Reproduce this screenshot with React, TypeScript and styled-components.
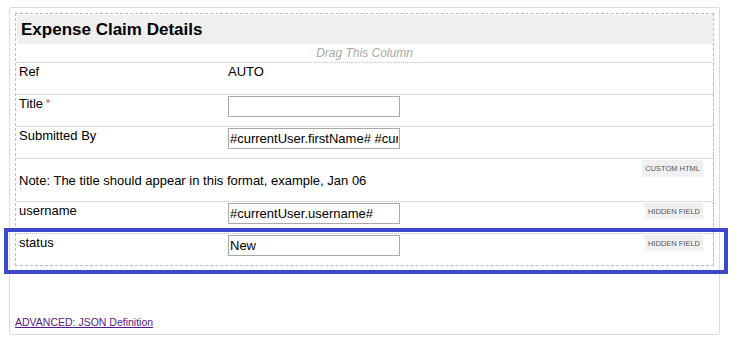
import React from "react";
import styled, { createGlobalStyle } from "styled-components";

const GlobalStyle = createGlobalStyle`
  body {
    margin: 0;
    background: #ffffff;
    font-family: "Liberation Sans", Arial, sans-serif;
    font-size: 13px;
    color: #000;
  }
`;

const Panel = styled.div`
  margin: 7px 0 0 9px;
  width: 711px;
  box-sizing: border-box;
  border: 1px solid #dcdcdc;
  border-radius: 2px;
  padding: 5px 5px 5px 5px;
`;

const Section = styled.div`
  border: 1px dashed #bdbdbd;
`;

const Header = styled.div`
  margin: 1px 0 0 1px;
  height: 29px;
  background: #efefef;
  display: flex;
  align-items: center;
  padding-left: 4px;
  font-size: 17px;
  font-weight: bold;
`;

const DragHint = styled.div`
  height: 18px;
  line-height: 19px;
  text-align: center;
  font-size: 12px;
  font-style: italic;
  color: #a8a8a8;
`;

const Rows = styled.div`
  border-top: 1px dotted #c4c4c4;
  border-right: 1px dotted #c4c4c4;
  margin-right: -1px;
`;

const Row = styled.div<{ $tall?: boolean }>`
  position: relative;
  display: grid;
  grid-template-columns: 209px 1fr auto;
  align-items: start;
  box-sizing: border-box;
  height: ${(p) => (p.$tall ? "43px" : "32px")};
  padding: 1px 10px 0 3px;
  border-bottom: 1px dotted #c4c4c4;
  &:last-child {
    border-bottom: none;
    height: 31px;
  }
`;

const Label = styled.div`
  line-height: 15px;
`;

const Required = styled.span`
  color: #e03a3a;
  font-size: 10px;
  margin-left: 3px;
  vertical-align: top;
`;

const Value = styled.div`
  line-height: 15px;
`;

const NoteText = styled.div`
  grid-column: 1 / 3;
  grid-row: 1;
  margin-top: 13px;
  line-height: 15px;
`;

const Field = styled.input`
  box-sizing: border-box;
  width: 172px;
  height: 21px;
  border: 1px solid #a9a9a9;
  padding: 0 1px;
  font-family: "Liberation Sans", Arial, sans-serif;
  font-size: 13px;
  color: #000;
  background: #fff;
  outline: none;
`;

const Badge = styled.span<{ $tall?: boolean }>`
  grid-column: 3;
  grid-row: 1;
  justify-self: end;
  display: inline-flex;
  align-items: center;
  height: ${(p) => (p.$tall ? "17px" : "16px")};
  padding: 0 3px;
  background: #f0f0f0;
  color: #555;
  font-size: 7.5px;
  white-space: nowrap;
`;

const Highlight = styled.div`
  position: absolute;
  left: -12px;
  top: -6px;
  right: -15px;
  bottom: -9px;
  border: 4px solid #3d47c9;
  pointer-events: none;
`;

const JsonLink = styled.a`
  display: inline-block;
  margin-top: 50px;
  font-size: 10.5px;
  color: #551a8b;
  text-decoration: underline;
`;

export default function App() {
  return (
    <>
      <GlobalStyle />
      <Panel>
        <Section>
          <Header>Expense Claim Details</Header>
          <DragHint>Drag This Column</DragHint>
          <Rows>
            <Row>
              <Label>Ref</Label>
              <Value>AUTO</Value>
            </Row>
            <Row>
              <Label>
                Title<Required>*</Required>
              </Label>
              <Field defaultValue="" />
            </Row>
            <Row>
              <Label>Submitted By</Label>
              <Field defaultValue="#currentUser.firstName# #currentUser.lastName#" />
            </Row>
            <Row $tall>
              <NoteText>Note: The title should appear in this format, example, Jan 06</NoteText>
              <Badge $tall>CUSTOM HTML</Badge>
            </Row>
            <Row>
              <Label>username</Label>
              <Field defaultValue="#currentUser.username#" />
              <Badge>HIDDEN FIELD</Badge>
            </Row>
            <Row>
              <Label>status</Label>
              <Field defaultValue="New" />
              <Badge>HIDDEN FIELD</Badge>
              <Highlight />
            </Row>
          </Rows>
        </Section>
        <JsonLink href="#">ADVANCED: JSON Definition</JsonLink>
      </Panel>
    </>
  );
}
